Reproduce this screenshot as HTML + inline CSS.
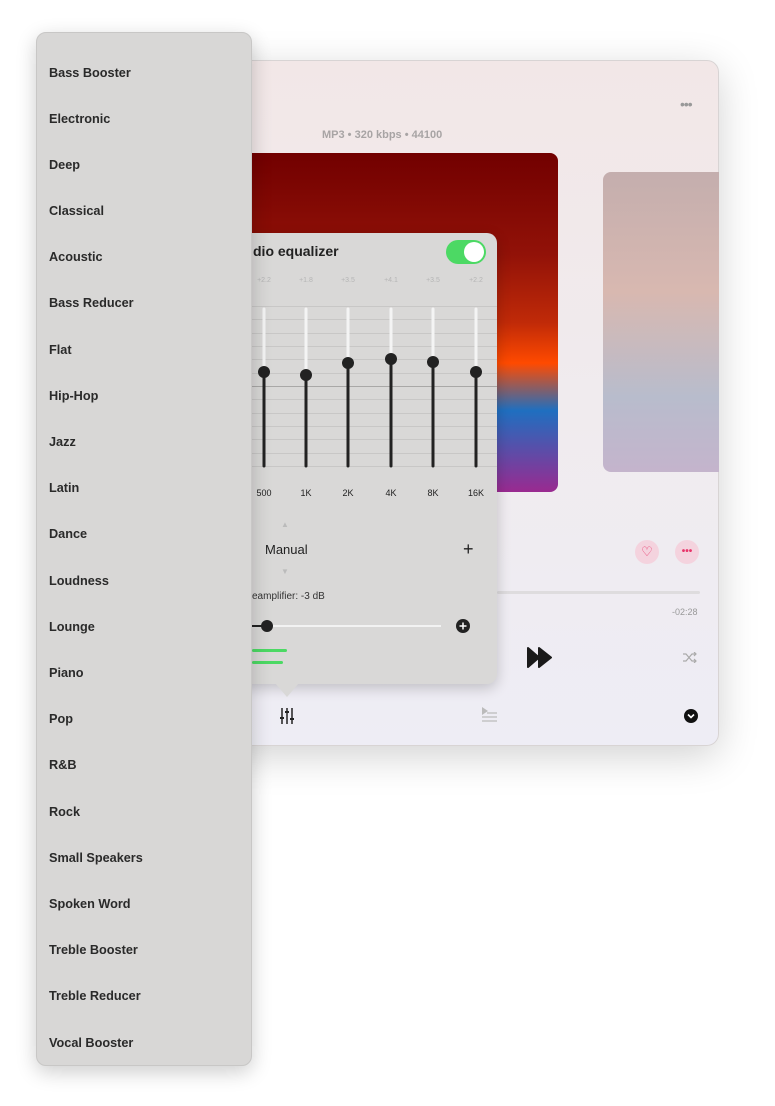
<!DOCTYPE html>
<html><head><style>
body{margin:0;width:775px;height:1106px;background:#fff;position:relative;overflow:hidden;font-family:"Liberation Sans",sans-serif}
.abs{position:absolute}
.win{left:200px;top:60px;width:519px;height:686px;border-radius:12px;background:linear-gradient(180deg,#f2e7e7 0%,#f0ebee 50%,#eeedf5 100%);box-shadow:0 10px 40px rgba(0,0,0,.18);border:1px solid #d8d4d4;box-sizing:border-box}
.menu{left:36px;top:32px;width:216px;height:1034px;border-radius:10px;background:#d8d7d6;box-shadow:0 6px 20px rgba(0,0,0,.2);border:1px solid #c8c7c6;box-sizing:border-box}
.menu div{position:absolute;left:12px;font-size:12.7px;font-weight:bold;color:#2a2a2a}
.pop{left:240px;top:233px;width:257px;height:451px;background:#d9d8d7;border-radius:10px;box-shadow:0 4px 14px rgba(0,0,0,.2)}
.val{font-size:7px;color:#b5b5b5;width:30px;text-align:center}
.lab{font-size:9px;color:#222;width:30px;text-align:center}
</style></head><body>
<div class="abs win"></div>
<div class="abs" style="left:680px;top:96px;font-size:14px;color:#999;letter-spacing:-1px">•••</div>
<div class="abs" style="left:322px;top:129px;font-size:11px;font-weight:bold;color:#a8a4a4">MP3 • 320 kbps • 44100</div>
<div class="abs" style="left:240px;top:153px;width:318px;height:339px;border-radius:0 8px 8px 0;background:linear-gradient(180deg,#720000 0%,#921208 30%,#c02a08 50%,#ff4a00 62%,#1f6fc0 76%,#9a2a90 100%)"></div>
<div class="abs" style="left:603px;top:172px;width:116px;height:300px;border-radius:8px 0 0 8px;background:linear-gradient(180deg,#c4aeae 0%,#d8b8b0 40%,#b8bccc 75%,#c4b4cc 100%)"></div>
<div class="abs" style="left:635px;top:540px;width:24px;height:24px;border-radius:50%;background:#f4d3de;color:#e8356a;font-size:13px;text-align:center;line-height:24px">♡</div>
<div class="abs" style="left:675px;top:540px;width:24px;height:24px;border-radius:50%;background:#f4d3de;color:#e8356a;font-size:10px;text-align:center;line-height:24px;font-weight:bold">•••</div>
<div class="abs" style="left:497px;top:591px;width:203px;height:3px;background:#dedcde;border-radius:2px"></div>
<div class="abs" style="left:672px;top:607px;font-size:9px;color:#999">-02:28</div>
<svg class="abs" style="left:527px;top:647px" width="25" height="21"><path d="M1 1L12 10.5L1 20Z M12 1L24 10.5L12 20Z" fill="#1a1a1a" stroke="#1a1a1a" stroke-linejoin="round" stroke-width="2"/></svg>
<svg class="abs" style="left:683px;top:652px" width="15" height="11"><path d="M0 2h3l6 7h4M0 9h3l6-7h4M11 0l2 2-2 2M11 7l2 2-2 2" fill="none" stroke="#aaa" stroke-width="1.2"/></svg>
<svg class="abs" style="left:280px;top:708px" width="15" height="16"><path d="M2 0v16M7 0v16M12 0v16" stroke="#222" stroke-width="1.5"/><rect x="0" y="9" width="4" height="2" fill="#222"/><rect x="5" y="3" width="4" height="2" fill="#222"/><rect x="10" y="10" width="4" height="2" fill="#222"/></svg>
<svg class="abs" style="left:481px;top:707px" width="16" height="15"><path d="M1 0L7 4L1 8Z" fill="#bbb"/><path d="M6 6h10M1 10h15M1 14h15" stroke="#bbb" stroke-width="1.3"/></svg>
<svg class="abs" style="left:684px;top:709px" width="14" height="14"><circle cx="7" cy="7" r="7" fill="#111"/><path d="M4 5.5L7 8.5L10 5.5" stroke="#fff" stroke-width="1.6" fill="none"/></svg>

<div class="abs pop"></div>
<svg class="abs" style="left:275px;top:683px" width="24" height="15"><path d="M0 0L12 14L24 0Z" fill="#d9d8d7"/></svg>
<div class="abs" style="left:253px;top:243px;font-size:14px;font-weight:bold;color:#222">dio equalizer</div>
<div class="abs" style="left:446px;top:240px;width:40px;height:24px;border-radius:12px;background:#4cd964"><div class="abs" style="left:18px;top:2px;width:20px;height:20px;border-radius:50%;background:#fff"></div></div>
<svg class="abs" style="left:240px;top:300px" width="257" height="170">
<g stroke="#c8c7c6" stroke-width="1">
<line x1="0" y1="6.5" x2="257" y2="6.5"/><line x1="0" y1="19.5" x2="257" y2="19.5"/><line x1="0" y1="33.5" x2="257" y2="33.5"/><line x1="0" y1="46.5" x2="257" y2="46.5"/><line x1="0" y1="59.5" x2="257" y2="59.5"/><line x1="0" y1="73.5" x2="257" y2="73.5"/><line x1="0" y1="99.5" x2="257" y2="99.5"/><line x1="0" y1="113.5" x2="257" y2="113.5"/><line x1="0" y1="126.5" x2="257" y2="126.5"/><line x1="0" y1="139.5" x2="257" y2="139.5"/><line x1="0" y1="153.5" x2="257" y2="153.5"/><line x1="0" y1="166.5" x2="257" y2="166.5"/></g>
<line x1="0" y1="86.5" x2="257" y2="86.5" stroke="#a9a8a7"/>
<g stroke-width="3" stroke-linecap="round">
<line x1="24" y1="9" x2="24" y2="72" stroke="#f4f4f4"/><line x1="24" y1="72" x2="24" y2="166" stroke="#222"/>
<line x1="66" y1="9" x2="66" y2="75" stroke="#f4f4f4"/><line x1="66" y1="75" x2="66" y2="166" stroke="#222"/>
<line x1="108" y1="9" x2="108" y2="63" stroke="#f4f4f4"/><line x1="108" y1="63" x2="108" y2="166" stroke="#222"/>
<line x1="151" y1="9" x2="151" y2="59" stroke="#f4f4f4"/><line x1="151" y1="59" x2="151" y2="166" stroke="#222"/>
<line x1="193" y1="9" x2="193" y2="62" stroke="#f4f4f4"/><line x1="193" y1="62" x2="193" y2="166" stroke="#222"/>
<line x1="236" y1="9" x2="236" y2="72" stroke="#f4f4f4"/><line x1="236" y1="72" x2="236" y2="166" stroke="#222"/></g>
<g fill="#222"><circle cx="24" cy="72" r="6"/><circle cx="66" cy="75" r="6"/><circle cx="108" cy="63" r="6"/><circle cx="151" cy="59" r="6"/><circle cx="193" cy="62" r="6"/><circle cx="236" cy="72" r="6"/></g>
</svg>
<div class="abs val" style="left:249px;top:277px">+2.2</div><div class="abs val" style="left:291px;top:277px">+1.8</div><div class="abs val" style="left:333px;top:277px">+3.5</div><div class="abs val" style="left:376px;top:277px">+4.1</div><div class="abs val" style="left:418px;top:277px">+3.5</div><div class="abs val" style="left:461px;top:277px">+2.2</div>
<div class="abs lab" style="left:249px;top:488px">500</div><div class="abs lab" style="left:291px;top:488px">1K</div><div class="abs lab" style="left:333px;top:488px">2K</div><div class="abs lab" style="left:376px;top:488px">4K</div><div class="abs lab" style="left:418px;top:488px">8K</div><div class="abs lab" style="left:461px;top:488px">16K</div>
<div class="abs" style="left:281px;top:520px;font-size:8px;color:#bbb">▲</div>
<div class="abs" style="left:281px;top:567px;font-size:8px;color:#bbb">▼</div>
<svg class="abs" style="left:252px;top:537px" width="14" height="24"><path d="M0 0L13 12L0 24Z" fill="#d9d8d7"/></svg>
<div class="abs" style="left:265px;top:542px;font-size:13px;color:#222">Manual</div>
<div class="abs" style="left:463px;top:539px;font-size:18px;color:#222">+</div>
<div class="abs" style="left:252px;top:591px;font-size:10px;color:#333">eamplifier: -3 dB</div>
<div class="abs" style="left:267px;top:625px;width:174px;height:2px;background:#f2f2f2"></div>
<div class="abs" style="left:252px;top:625px;width:15px;height:2px;background:#222"></div>
<div class="abs" style="left:261px;top:620px;width:12px;height:12px;border-radius:50%;background:#222"></div>
<svg class="abs" style="left:456px;top:619px" width="14" height="14"><circle cx="7" cy="7" r="7" fill="#222"/><path d="M7 3.5v7M3.5 7h7" stroke="#fff" stroke-width="1.5"/></svg>
<div class="abs" style="left:252px;top:649px;width:35px;height:3px;background:#4cd964;border-radius:2px"></div>
<div class="abs" style="left:252px;top:661px;width:31px;height:3px;background:#4cd964;border-radius:2px"></div>

<div class="abs menu">
<div style="top:33px">Bass Booster</div><div style="top:79px">Electronic</div><div style="top:125px">Deep</div><div style="top:171px">Classical</div><div style="top:217px">Acoustic</div><div style="top:263px">Bass Reducer</div><div style="top:310px">Flat</div><div style="top:356px">Hip-Hop</div><div style="top:402px">Jazz</div><div style="top:448px">Latin</div><div style="top:494px">Dance</div><div style="top:541px">Loudness</div><div style="top:587px">Lounge</div><div style="top:633px">Piano</div><div style="top:679px">Pop</div><div style="top:725px">R&amp;B</div><div style="top:772px">Rock</div><div style="top:818px">Small Speakers</div><div style="top:864px">Spoken Word</div><div style="top:910px">Treble Booster</div><div style="top:956px">Treble Reducer</div><div style="top:1003px">Vocal Booster</div>
</div>
</body></html>
